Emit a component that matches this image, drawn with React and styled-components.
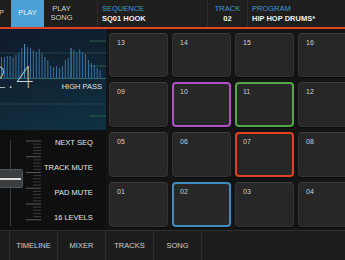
import React from "react";
import styled, { createGlobalStyle } from "styled-components";

const GlobalStyle = createGlobalStyle`
  html, body { margin: 0; padding: 0; background: #141414; }
  body { font-family: "Liberation Sans", Arial, sans-serif; }
`;

const Screen = styled.div`
  width: 345px;
  height: 260px;
  overflow: hidden;
  background: #141414;
  display: flex;
  flex-direction: column;
`;

const Header = styled.div`
  height: 27px;
  display: flex;
  background: #1e1e1e;
  border-bottom: 2px solid #e2431f;
  flex-shrink: 0;
`;

const ModeTab = styled.div`
  width: ${(p) => p.$w}px;
  display: flex;
  flex-direction: column;
  align-items: ${(p) => (p.$clip ? "flex-end" : "center")};
  justify-content: center;
  padding-right: ${(p) => p.$pr || 0}px;
  box-sizing: border-box;
  overflow: hidden;
  background: ${(p) => (p.$active ? "#4ba0d6" : "transparent")};
  color: ${(p) => (p.$active ? "#e4f2fb" : "#d0d0d0")};
  font-size: 7.5px;
  line-height: 8.5px;
  white-space: nowrap;
  flex-shrink: 0;
`;

const Field = styled.div`
  width: ${(p) => p.$w}px;
  flex: ${(p) => (p.$grow ? 1 : "none")};
  border-left: 1px solid #2c2c2c;
  display: flex;
  flex-direction: column;
  justify-content: center;
  align-items: ${(p) => (p.$center ? "center" : "flex-start")};
  padding-left: ${(p) => (p.$center ? 0 : 4)}px;
  gap: 2px;
  box-sizing: border-box;
`;

const FieldLabel = styled.span`
  color: #3f9ad6;
  font-size: 7.5px;
  line-height: 8px;
`;

const FieldValue = styled.span`
  color: #f0f0f0;
  font-size: 7.5px;
  line-height: 8px;
  font-weight: bold;
`;

const Body = styled.div`
  height: 201px;
  display: flex;
  flex-shrink: 0;
`;

const LeftColumn = styled.div`
  width: 106px;
  display: flex;
  flex-direction: column;
  flex-shrink: 0;
`;

const FilterPanel = styled.div`
  position: relative;
  height: 101px;
  overflow: hidden;
  background: linear-gradient(165deg, #101a2b 0%, #102636 55%, #0f3242 100%);
`;

const BigValue = styled.div`
  position: absolute;
  left: -11px;
  top: 30px;
  font-family: Roboto, "Open Sans", sans-serif;
  font-weight: 100;
  font-size: 32px;
  line-height: 36px;
  letter-spacing: 1px;
  color: #c9d2da;
`;

const FilterName = styled.div`
  position: absolute;
  right: 4px;
  top: 53px;
  font-size: 7.5px;
  color: #e2e2e2;
`;

const ControlPanel = styled.div`
  height: 100px;
  background: #0f0f0f;
  display: flex;
`;

const FaderArea = styled.div`
  width: 44px;
  position: relative;
  flex-shrink: 0;
`;

const FaderCap = styled.div`
  position: absolute;
  left: -1px;
  top: 39px;
  width: 24px;
  height: 19px;
  background: #3a3e41;
  border: 1px solid #52575b;
  border-radius: 2px;
  box-sizing: border-box;
  &::after {
    content: "";
    position: absolute;
    left: 0;
    right: 1px;
    top: 8px;
    height: 2px;
    background: #dcdcdc;
  }
`;

const LabelList = styled.div`
  flex: 1;
  display: flex;
  flex-direction: column;
  align-items: flex-end;
  padding: 8px 14px 0 0;
  gap: 15px;
`;

const ControlLabel = styled.span`
  font-size: 7.5px;
  line-height: 10px;
  color: #e6e6e6;
  white-space: nowrap;
`;

const PadGrid = styled.div`
  flex: 1;
  padding: 4px 0 0 3px;
  display: grid;
  grid-template-columns: repeat(4, 59px);
  grid-template-rows: 44px 45px 45px 45px;
  column-gap: 4px;
  row-gap: 5px;
`;

const Pad = styled.div`
  border-radius: 4px;
  background: #272727;
  border: ${(p) => (p.$accent ? `2px solid ${p.$accent}` : "1px solid #333")};
  border-top-color: ${(p) => p.$accent || "#3e3e3e"};
  box-shadow: 0 1px 0 #0a0a0a;
  box-sizing: border-box;
  padding: ${(p) => (p.$accent ? "4px 0 0 6px" : "5px 0 0 7px")};
`;

const PadNumber = styled.div`
  color: #d2d2d2;
  font-size: 7px;
  line-height: 8px;
  opacity: 0.99;
`;

const Footer = styled.div`
  flex: 1;
  display: flex;
  background: #1c1c1c;
  border-top: 1px solid #2e2e2e;
`;

const FooterTab = styled.div`
  width: ${(p) => p.$w}px;
  display: flex;
  align-items: center;
  justify-content: center;
  border-right: 1px solid #2c2c2c;
  color: #cfcfcf;
  font-size: 7.5px;
  box-sizing: border-box;
  flex-shrink: 0;
`;

const bars = [
  57, 57, 56, 56, 57, 55, 53, 48, 44, 47, 48, 50, 52, 49, 53, 57, 60, 66, 67,
  66, 68, 66, 60, 58, 48, 50, 52, 49, 52, 54, 60, 63, 65, 68, 70,
];

function Spectrum() {
  const base = 49;
  return (
    <svg width="106" height="101" style={{ position: "absolute", left: 0, top: 0 }}>
      <line x1="89" y1="12" x2="106" y2="12" stroke="#2f5e4f" strokeWidth="1" />
      <line x1="0" y1="24" x2="106" y2="24" stroke="#21434a" strokeWidth="1" />
      <line x1="89" y1="37" x2="106" y2="37" stroke="#2f5e4f" strokeWidth="1" />
      <line x1="0" y1="75" x2="106" y2="75" stroke="#21444a" strokeWidth="1" />
      <line x1="89" y1="87" x2="106" y2="87" stroke="#2f5e4f" strokeWidth="1" />
      {bars.map((top, i) => (
        <rect
          key={i}
          x={1 + i * 2.9}
          y={top - 29}
          width="0.9"
          height={base - (top - 29)}
          fill={i === 8 || i === 24 ? "#5aa3d6" : "#3b7aad"}
        />
      ))}
      <line x1="0" y1={base + 0.5} x2="106" y2={base + 0.5} stroke="#2d6b72" strokeWidth="1" />
    </svg>
  );
}

function FaderTicks() {
  const ticks = [];
  for (let i = 0; i <= 25; i++) {
    const y = 11 + i * 3.15;
    const major = i % 5 === 0;
    ticks.push(
      <line
        key={i}
        x1={major ? 26 : 33}
        y1={y}
        x2="41"
        y2={y}
        stroke={major ? "#5a5a5a" : "#3c3c3c"}
        strokeWidth="1"
      />
    );
  }
  return (
    <svg width="44" height="100" style={{ position: "absolute", left: 0, top: 0 }}>
      <line x1="10.5" y1="10" x2="10.5" y2="96" stroke="#3a3a3a" strokeWidth="1" />
      {ticks}
    </svg>
  );
}

const pads = [
  ["13"], ["14"], ["15"], ["16"],
  ["09"], ["10", "#b24fc6"], ["11", "#4fa843"], ["12"],
  ["05"], ["06"], ["07", "#e2431f"], ["08"],
  ["01"], ["02", "#3f8cc2"], ["03"], ["04"],
];

export default function App() {
  return (
    <>
      <GlobalStyle />
      <Screen>
        <Header>
          <ModeTab $w={11} $clip $pr={7}>
            <span>LOOP</span>
          </ModeTab>
          <ModeTab $w={33} $active>
            PLAY
          </ModeTab>
          <ModeTab $w={53} $pr={18}>
            <span>PLAY</span>
            <span>SONG</span>
          </ModeTab>
          <Field $w={110}>
            <FieldLabel>SEQUENCE</FieldLabel>
            <FieldValue>SQ01 HOOK</FieldValue>
          </Field>
          <Field $w={40} $center>
            <FieldLabel>TRACK</FieldLabel>
            <FieldValue>02</FieldValue>
          </Field>
          <Field $grow>
            <FieldLabel>PROGRAM</FieldLabel>
            <FieldValue>HIP HOP DRUMS*</FieldValue>
          </Field>
        </Header>
        <Body>
          <LeftColumn>
            <FilterPanel>
              <Spectrum />
              <BigValue>2.4</BigValue>
              <FilterName>HIGH PASS</FilterName>
            </FilterPanel>
            <ControlPanel>
              <FaderArea>
                <FaderTicks />
                <FaderCap />
              </FaderArea>
              <LabelList>
                <ControlLabel>NEXT SEQ</ControlLabel>
                <ControlLabel>TRACK MUTE</ControlLabel>
                <ControlLabel>PAD MUTE</ControlLabel>
                <ControlLabel>16 LEVELS</ControlLabel>
              </LabelList>
            </ControlPanel>
          </LeftColumn>
          <PadGrid>
            {pads.map(([n, c]) => (
              <Pad key={n} $accent={c}>
                <PadNumber>{n}</PadNumber>
              </Pad>
            ))}
          </PadGrid>
        </Body>
        <Footer>
          <FooterTab $w={10} />
          <FooterTab $w={48}>TIMELINE</FooterTab>
          <FooterTab $w={48}>MIXER</FooterTab>
          <FooterTab $w={48}>TRACKS</FooterTab>
          <FooterTab $w={48}>SONG</FooterTab>
        </Footer>
      </Screen>
    </>
  );
}
